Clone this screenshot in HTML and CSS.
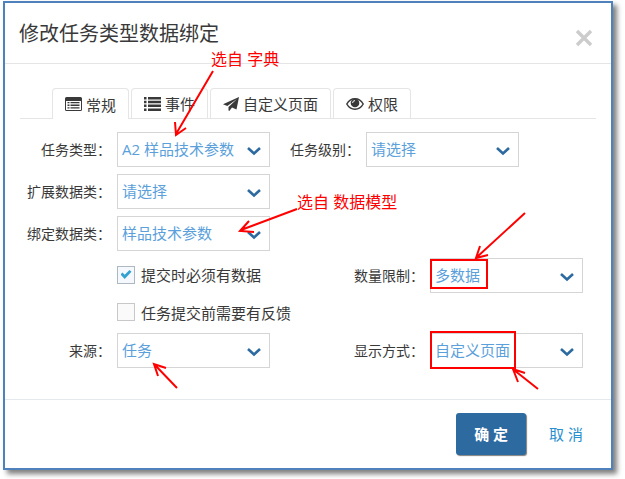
FILE: index.html
```html
<!DOCTYPE html>
<html lang="zh-CN">
<head>
    <meta charset="UTF-8">
    <meta name="viewport" content="width=device-width, initial-scale=1.0">
    <title>修改任务类型数据绑定</title>
    <link rel="stylesheet" href="styles.css">
</head>
<body>
    <svg width="0" height="0" class="sprite" aria-hidden="true">
        <symbol id="chevron" viewBox="0 0 14 10">
            <path d="M1 2 L7 7.5 L13 2" fill="none" stroke="currentColor" stroke-width="2.6"/>
        </symbol>
    </svg>

    <div class="stage">
        <div class="dialog" role="dialog" aria-labelledby="dialogTitle">
            <header class="dialog-header">
                <h1 id="dialogTitle">修改任务类型数据绑定</h1>
                <button type="button" class="close" aria-label="关闭">
                    <svg width="18" height="18" viewBox="0 0 18 18"><path d="M2 2 L16 16 M16 2 L2 16" stroke="currentColor" stroke-width="3.4"/></svg>
                </button>
            </header>

            <div class="dialog-body">
                <nav class="tabs">
                    <a href="#general" class="tab active">
                        <svg width="17" height="14" viewBox="0 0 17 14"><path fill="currentColor" fill-rule="evenodd" d="M1.500 0h14A1.500 1.500 0 0 1 17 1.500v11a1.500 1.500 0 0 1-1.500 1.500h-14A1.500 1.500 0 0 1 0 12.500v-11A1.500 1.500 0 0 1 1.500 0zM1 4v8.500q0 .5.5.5h14q.5 0 .5-.5V4zM2.500 5h2v1.300h-2zM5.500 5h9v1.300h-9zM2.500 7.600h2v1.300h-2zM5.500 7.600h9v1.300h-9zM2.500 10.200h2v1.300h-2zM5.500 10.200h9v1.300h-9z"/></svg>
                        <span>常规</span>
                    </a>
                    <a href="#events" class="tab">
                        <svg width="17" height="14" viewBox="0 0 17 14"><path fill="currentColor" d="M0 0h2.500v2.500H0zM4 0h13v2.500H4zM0 3.800h2.500v2.500H0zM4 3.800h13v2.500H4zM0 7.600h2.500v2.500H0zM4 7.600h13v2.500H4zM0 11.400h2.500v2.500H0zM4 11.400h13v2.500H4z"/></svg>
                        <span>事件</span>
                    </a>
                    <a href="#custom" class="tab">
                        <svg width="16" height="14" viewBox="0 0 16 14"><path fill="currentColor" d="M16 0 L13.500 12.500 L9 10.600 L6.300 14 L5.500 13.500 V10 L14 2 L4.300 9 L0 7.300 Z"/></svg>
                        <span>自定义页面</span>
                    </a>
                    <a href="#permission" class="tab">
                        <svg width="18" height="12" viewBox="0 0 18 12"><path d="M.8 6C2.600 2.700 5.500.8 9 .8S15.400 2.700 17.200 6C15.400 9.300 12.500 11.200 9 11.200S2.600 9.300.8 6z" fill="none" stroke="currentColor" stroke-width="1.5"/><circle cx="9" cy="5" r="4.300" fill="currentColor"/><path d="M6.600 5A2.400 2.400 0 0 1 9 2.600" fill="none" stroke="#fff" stroke-width="1"/></svg>
                        <span>权限</span>
                    </a>
                </nav>

                <form class="form" id="bindForm">
                    <div class="row">
                        <label class="label" for="taskType">任务类型：</label>
                        <div class="select">
                            <select id="taskType"><option>A2 样品技术参数</option></select>
                            <svg class="arrow"><use href="#chevron"/></svg>
                        </div>
                        <label class="label label-near" for="taskLevel">任务级别：</label>
                        <div class="select">
                            <select id="taskLevel"><option>请选择</option></select>
                            <svg class="arrow"><use href="#chevron"/></svg>
                        </div>
                    </div>
                    <div class="row">
                        <label class="label" for="extClass">扩展数据类：</label>
                        <div class="select">
                            <select id="extClass"><option>请选择</option></select>
                            <svg class="arrow"><use href="#chevron"/></svg>
                        </div>
                    </div>
                    <div class="row">
                        <label class="label" for="bindClass">绑定数据类：</label>
                        <div class="select">
                            <select id="bindClass"><option>样品技术参数</option></select>
                            <svg class="arrow"><use href="#chevron"/></svg>
                        </div>
                    </div>
                    <div class="row">
                        <label class="check">
                            <input type="checkbox" checked>
                            <span>提交时必须有数据</span>
                        </label>
                        <label class="label label-far" for="countLimit">数量限制：</label>
                        <div class="select">
                            <select id="countLimit"><option>多数据</option></select>
                            <svg class="arrow"><use href="#chevron"/></svg>
                        </div>
                    </div>
                    <div class="row row-short">
                        <label class="check">
                            <input type="checkbox">
                            <span>任务提交前需要有反馈</span>
                        </label>
                    </div>
                    <div class="row">
                        <label class="label" for="source">来源：</label>
                        <div class="select">
                            <select id="source"><option>任务</option></select>
                            <svg class="arrow"><use href="#chevron"/></svg>
                        </div>
                        <label class="label label-far" for="display">显示方式：</label>
                        <div class="select">
                            <select id="display"><option>自定义页面</option></select>
                            <svg class="arrow"><use href="#chevron"/></svg>
                        </div>
                    </div>
                </form>
            </div>

            <footer class="dialog-footer">
                <button type="submit" form="bindForm" class="btn btn-primary">确 定</button>
                <button type="button" class="btn btn-link">取 消</button>
            </footer>
        </div>

        <!-- red notes over the dialog -->
        <svg class="notes">
            <text x="211" y="65">选自 字典</text>
            <text x="297" y="208">选自 数据模型</text>
            <path d="M213 71 L176 134 M175 122 L176 135 L186 128"/>
            <path d="M297 209 L241 230 M249 221 L240 231 L254 232"/>
            <path d="M525 213 L477 257 M480 246 L476 258 L488 255"/>
            <path d="M177 388 L154 364 M158 376 L154 364 L166 368"/>
            <path d="M538 389 L514 370 M518 382 L513 369 L525 373"/>
            <rect x="431" y="260" width="56" height="28"/>
            <rect x="431" y="332" width="84" height="36"/>
        </svg>
    </div>
</body>
</html>
```

FILE: styles.css
```css
:root {
    --frame: #4f81bd;
    --primary: #2d6a9f;
    --link: #2a8fcf;
    --value: #5b9fdb;
    --text: #393939;
    --line: #e5e5e5;
    --control: #d5d5d5;
    --note: #ff0000;
    --font: "Open Sans", "Noto Sans CJK SC", sans-serif;
}

* {
    box-sizing: border-box;
}

body {
    margin: 0;
    background: #fff;
    color: var(--text);
    font-family: var(--font);
    font-size: 15px;
}

button,
select {
    font: inherit;
}

.sprite {
    display: block;
}

.stage {
    position: relative;
    padding: 1px 12px 9px 3px;
    overflow: hidden;
}

.dialog {
    border: 2px solid var(--frame);
    background: #fff;
    box-shadow: 4px 4px 5px rgba(0, 0, 0, 0.5);
}

.dialog-header {
    display: flex;
    justify-content: space-between;
    align-items: center;
    height: 61px;
    padding: 0 18px 0 14px;
    border-bottom: 1px solid var(--line);
}

.dialog-header h1 {
    margin: 0;
    padding-bottom: 2px;
    font-size: 20px;
    font-weight: 400;
}

.close {
    display: flex;
    padding: 0;
    margin-top: 10px;
    border: 0;
    background: none;
    color: #ccc;
    cursor: pointer;
}

.dialog-body {
    padding: 24px 15px 31px;
}

.tabs {
    display: flex;
    gap: 2px;
    padding-left: 32px;
    border-bottom: 1px solid var(--line);
}

.tab {
    display: flex;
    align-items: center;
    gap: 4px;
    height: 30px;
    padding: 0 12px;
    border: 1px solid var(--line);
    border-bottom: 0;
    border-radius: 4px 4px 0 0;
    color: var(--text);
    text-decoration: none;
}

.tab.active {
    height: 31px;
    margin-bottom: -1px;
    background: #fff;
}

.form {
    display: flex;
    flex-direction: column;
    gap: 7px;
    padding-top: 13px;
}

.row {
    display: flex;
    align-items: center;
    min-height: 35px;
}

.row-short {
    min-height: 26px;
}

.label {
    width: 97px;
    padding: 0 6px 2px 0;
    font-size: 14px;
    text-align: right;
    white-space: nowrap;
}

.label-near {
    width: 96px;
}

.label-far {
    width: 160px;
}

.select {
    position: relative;
    width: 153px;
}

.select select {
    display: block;
    width: 100%;
    height: 35px;
    padding: 0 0 2px 4px;
    border: 1px solid var(--control);
    border-radius: 0;
    background: #fff;
    color: var(--value);
    appearance: none;
}

.arrow {
    position: absolute;
    top: 14px;
    right: 9px;
    width: 14px;
    height: 10px;
    color: var(--primary);
    pointer-events: none;
}

.check {
    display: flex;
    align-items: center;
    gap: 6px;
    width: 250px;
    padding: 0 0 2px 97px;
    white-space: nowrap;
}

.check input {
    display: grid;
    place-items: center;
    flex: none;
    width: 18px;
    height: 18px;
    margin: 0;
    border: 1px solid #c8c8c8;
    background: #fafafa;
    appearance: none;
}

.check input:checked {
    border-color: #adb8c0;
    background: #f5f8fc;
}

.check input:checked::before {
    content: "";
    width: 11px;
    height: 9px;
    background: #32a3ce;
    clip-path: polygon(0 50%, 18% 28%, 38% 52%, 82% 0, 100% 20%, 38% 100%);
}

.dialog-footer {
    display: flex;
    justify-content: flex-end;
    align-items: center;
    gap: 8px;
    padding: 13px;
    border-top: 1px solid #e4e9ee;
}

.btn {
    height: 42px;
    padding: 0 15px 2px;
    border: 0;
    border-radius: 3px;
    background: none;
    cursor: pointer;
}

.btn-primary {
    width: 70px;
    background: var(--primary);
    box-shadow: 1px 1px 1px rgba(0, 0, 0, 0.5);
    color: #fff;
    font-weight: 600;
}

.btn-link {
    color: var(--link);
}

.notes {
    position: absolute;
    top: 0;
    left: 0;
    width: 100%;
    height: 100%;
    fill: none;
    stroke: var(--note);
    stroke-width: 2;
    pointer-events: none;
}

.notes text {
    fill: var(--note);
    stroke: none;
    font-size: 16px;
}
```
